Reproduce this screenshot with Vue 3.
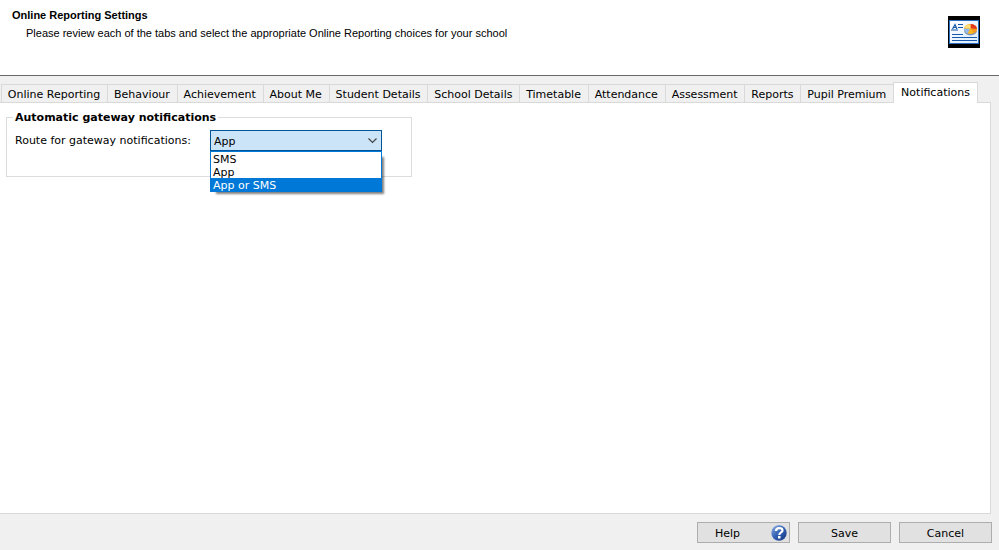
<script setup>
import { ref } from 'vue'

const tabs = [
  'Online Reporting',
  'Behaviour',
  'Achievement',
  'About Me',
  'Student Details',
  'School Details',
  'Timetable',
  'Attendance',
  'Assessment',
  'Reports',
  'Pupil Premium',
  'Notifications',
]
const activeTab = ref('Notifications')

const routes = ['SMS', 'App', 'App or SMS']
const route = ref('App')
const hovered = ref('App or SMS')
const open = ref(true)

function choose(option) {
  route.value = option
  open.value = false
}
</script>

<template>
  <div class="window">
    <header class="header">
      <div>
        <h1>Online Reporting Settings</h1>
        <p>Please review each of the tabs and select the appropriate Online Reporting choices for your school</p>
      </div>
      <svg class="logo" width="32" height="32" viewBox="0 0 32 32" aria-hidden="true">
        <defs>
          <linearGradient id="card" x1="0" y1="0" x2="1" y2="1">
            <stop offset="0" stop-color="#fff" />
            <stop offset="1" stop-color="#dcecfb" />
          </linearGradient>
        </defs>
        <rect width="32" height="32" fill="#000" />
        <rect x="1.5" y="4.5" width="29" height="23" fill="url(#card)" stroke="#2a6cc0" />
        <path d="M3 14h7M4.500 13l2.500-4.500L9 13M5.500 11.500h3" fill="none" stroke="#1558a8" stroke-width="1.200" />
        <path d="M10 8.500h5M10 11.500h5M4 18.500h11M4 21.500h25M4 24.500h25" stroke="#1558b0" />
        <ellipse cx="22.500" cy="14.500" rx="6.500" ry="5" fill="#7d95bd" />
        <ellipse cx="22.500" cy="13" rx="6.500" ry="5" fill="#fbb824" />
        <path d="M22.500 12.500V8a6.500 5 0 0 1 6.500 5z" fill="#e2381c" />
        <path d="M22.500 12.500V8.500a6.500 4.500 0 0 0-6 3.500z" fill="#ffdf80" />
        <path d="M16 12.500l6 .5-2.500 4.500a6.500 5 0 0 1-3.500-5z" fill="#8fb9ec" />
        <path d="M22.500 12.500l6.500 1a6.500 5 0 0 1-3.500 4z" fill="#f79a1e" />
      </svg>
    </header>

    <main class="body">
      <nav class="tabs" role="tablist">
        <button
          v-for="tab in tabs"
          :key="tab"
          type="button"
          role="tab"
          class="tab"
          :class="{ active: tab === activeTab }"
          :aria-selected="tab === activeTab"
          @click="activeTab = tab"
        >{{ tab }}</button>
      </nav>
      <section class="panel" role="tabpanel">
        <fieldset class="group">
          <legend>Automatic gateway notifications</legend>
          <div class="field">
            <label for="route">Route for gateway notifications:</label>
            <div class="combo">
              <select id="route" v-model="route" @mousedown.prevent="open = !open">
                <option v-for="r in routes" :key="r">{{ r }}</option>
              </select>
              <svg class="chevron" width="9" height="6" viewBox="0 0 9 6" aria-hidden="true">
                <path d="M.5.5l4 4 4-4" fill="none" stroke="#444" stroke-width="1.200" />
              </svg>
              <ul v-if="open" class="list" role="listbox">
                <li
                  v-for="r in routes"
                  :key="r"
                  role="option"
                  :aria-selected="r === route"
                  :class="{ hovered: r === hovered }"
                  @mouseenter="hovered = r"
                  @click="choose(r)"
                >{{ r }}</li>
              </ul>
            </div>
          </div>
        </fieldset>
      </section>
    </main>

    <footer class="footer">
      <button type="button" class="action help">
        <span>Help</span>
        <svg width="16" height="16" viewBox="0 0 16 16" aria-hidden="true">
          <defs>
            <linearGradient id="ball" x1="0" y1="0" x2="1" y2="1">
              <stop offset="0" stop-color="#8fb2e6" />
              <stop offset=".45" stop-color="#3866b8" />
              <stop offset="1" stop-color="#12337f" />
            </linearGradient>
          </defs>
          <circle cx="8" cy="8" r="7.700" fill="url(#ball)" />
          <path d="M5 6c0-4 6.500-3.500 6.500-.5C11.500 7.500 8.300 7.500 8.300 10" fill="none" stroke="#fff" stroke-width="2.200" />
          <rect x="7" y="11" width="2.500" height="2.500" fill="#fff" />
        </svg>
      </button>
      <button type="button" class="action">Save</button>
      <button type="button" class="action">Cancel</button>
    </footer>
  </div>
</template>

<style>
body {
  margin: 0;
  background: #f0f0f0;
}
</style>

<style scoped>
.window {
  box-sizing: border-box;
  display: flex;
  flex-direction: column;
  min-height: 100vh;
  background: #f0f0f0;
  color: #000;
  font: 11px/13px "DejaVu Sans", Verdana, sans-serif;
}

button,
select {
  font: inherit;
  color: inherit;
}

.header {
  display: flex;
  justify-content: space-between;
  align-items: flex-start;
  box-sizing: border-box;
  min-height: 76px;
  padding: 9px 19px 9px 12px;
  background: #fff;
  border-bottom: 1px solid #696969;
  font-family: "Liberation Sans", Arial, sans-serif;
}

.header h1 {
  margin: 0;
  font-size: 11px;
  line-height: 13px;
}

.header p {
  margin: 5px 0 0 14px;
}

.logo {
  flex: none;
  margin-top: 7px;
}

.body {
  flex: 1;
  display: flex;
  flex-direction: column;
  padding: 6px 8px 0 0;
}

.tabs {
  display: flex;
  align-items: flex-end;
  padding: 0 13px 0 1px;
}

.tab {
  flex: 1 0 auto;
  height: 18px;
  padding: 2px 6px 0 5px;
  background: #f0f0f0;
  border: 1px solid #d9d9d9;
  border-right: 0;
  border-bottom: 0;
  white-space: nowrap;
}

.tab.active {
  z-index: 1;
  flex-grow: 0;
  height: 21px;
  margin-bottom: -1px;
  padding: 0 7px 2px;
  background: #fff;
  border-right: 1px solid #d9d9d9;
}

.panel {
  flex: 1;
  padding: 8px 6px;
  background: #fff;
  border: 1px solid #d9d9d9;
  border-left: 0;
}

.group {
  box-sizing: border-box;
  width: 406px;
  max-width: 100%;
  min-height: 66px;
  margin: 0;
  padding: 6px 8px;
  border: 1px solid #dcdcdc;
}

.group legend {
  margin-left: -2px;
  padding: 0 2px;
  font-weight: bold;
}

.field {
  display: flex;
}

.field label {
  flex: 0 0 195px;
  padding-top: 4px;
}

.combo {
  position: relative;
  width: 172px;
}

.combo select {
  display: block;
  box-sizing: border-box;
  width: 100%;
  height: 21px;
  padding: 1px 3px 0;
  appearance: none;
  background: #cce4f7;
  border: 1px solid #005499;
  border-radius: 0;
  outline: 0;
}

.chevron {
  position: absolute;
  top: 8px;
  right: 5px;
  pointer-events: none;
}

.list {
  position: absolute;
  top: 21px;
  left: 0;
  right: 0;
  margin: 0;
  padding: 0;
  list-style: none;
  background: #fff;
  border: 1px solid #0078d7;
  box-shadow: 4px 4px 2px -2px rgba(0, 0, 0, 0.5);
}

.list li {
  padding: 2px 2px 0;
  line-height: 11px;
}

.list li.hovered {
  background: #0078d7;
  color: #fff;
}

.footer {
  display: flex;
  justify-content: flex-end;
  gap: 8px;
  padding: 8px 7px 7px;
}

.action {
  width: 93px;
  height: 21px;
  padding: 2px 0 0;
  background: #e1e1e1;
  border: 1px solid #adadad;
}

.help {
  display: flex;
  align-items: center;
  justify-content: space-between;
  padding: 1px 2px 0 17px;
}
</style>
